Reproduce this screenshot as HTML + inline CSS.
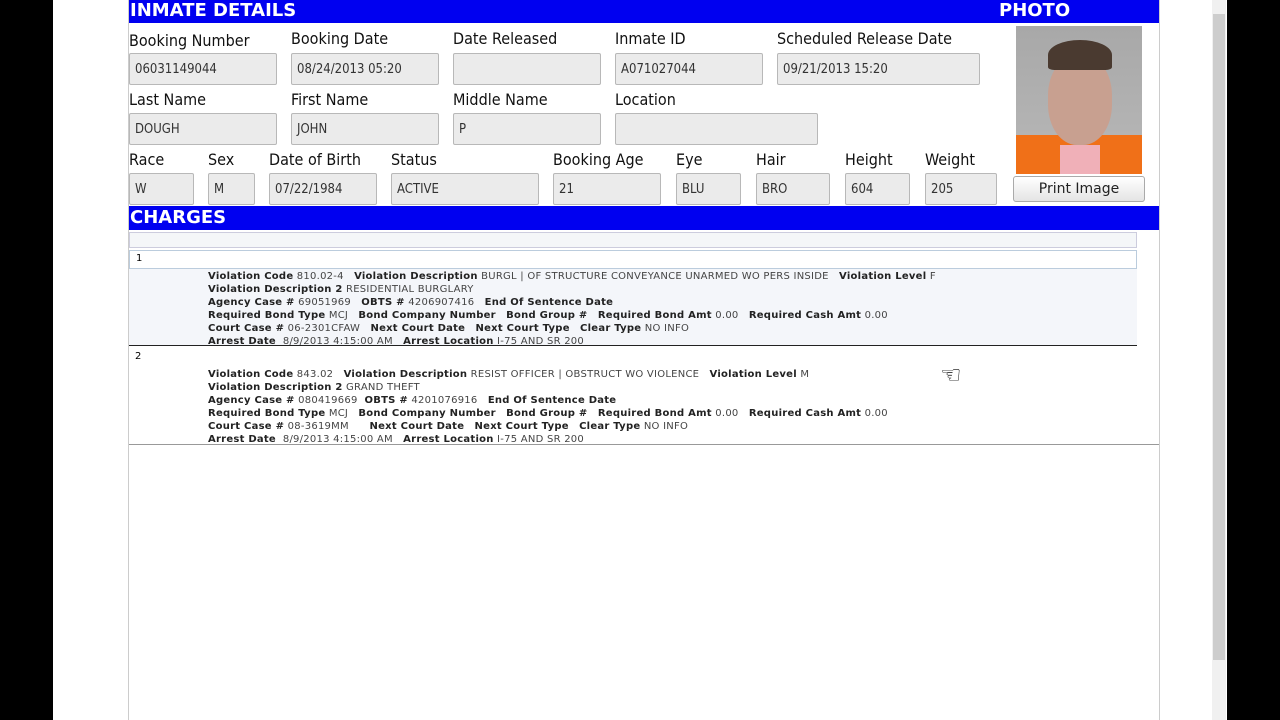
<!DOCTYPE html>
<html><head><style>
*{margin:0;padding:0;box-sizing:border-box}
body{width:1280px;height:720px;background:#000;position:relative;overflow:hidden;font-family:"DejaVu Sans","Liberation Sans",sans-serif}
.pg{position:absolute;left:53px;top:0;width:1174px;height:720px;background:#fff}
.a{position:absolute}
.hd{position:absolute;background:#0000f0;color:#fff;font-weight:bold;font-size:18px;padding-left:1px;line-height:22px}
.l{position:absolute;font-size:16px;color:#111;font-family:"DejaVu Sans Condensed","DejaVu Sans",sans-serif}
.i{position:absolute;height:32px;background:#ebebeb;border:1px solid #b8b8b8;border-radius:2px;font-size:13px;color:#333;padding-left:5px;line-height:32px;font-family:"DejaVu Sans Condensed","DejaVu Sans",sans-serif}
.c{position:absolute;left:208px;font-size:10px;letter-spacing:0.25px;color:#444;white-space:pre;line-height:13px;font-family:"DejaVu Sans","Liberation Sans",sans-serif}
.c b{color:#222}
</style></head><body>
<div class="pg"></div>
<div class="a" style="left:128px;top:0;width:1px;height:720px;background:#ccc"></div>
<div class="a" style="left:1159px;top:0;width:1px;height:720px;background:#ccc"></div>
<div class="a" style="left:1212px;top:0;width:14px;height:720px;background:#f0f0f0"></div>
<div class="a" style="left:1213px;top:14px;width:12px;height:646px;background:#cdcdcd"></div>
<div class="hd" style="left:129px;top:0;width:869px;height:23px">INMATE DETAILS</div>
<div class="hd" style="left:998px;top:0;width:161px;height:23px">PHOTO</div>

<div class="l" style="left:129px;top:31px">Booking Number</div>
<div class="l" style="left:291px;top:29px">Booking Date</div>
<div class="l" style="left:453px;top:29px">Date Released</div>
<div class="l" style="left:615px;top:29px">Inmate ID</div>
<div class="l" style="left:777px;top:29px">Scheduled Release Date</div>
<div class="i" style="left:129px;top:53px;width:148px">06031149044</div>
<div class="i" style="left:291px;top:53px;width:148px">08/24/2013 05:20</div>
<div class="i" style="left:453px;top:53px;width:148px"></div>
<div class="i" style="left:615px;top:53px;width:148px">A071027044</div>
<div class="i" style="left:777px;top:53px;width:203px">09/21/2013 15:20</div>

<div class="l" style="left:129px;top:90px">Last Name</div>
<div class="l" style="left:291px;top:90px">First Name</div>
<div class="l" style="left:453px;top:90px">Middle Name</div>
<div class="l" style="left:615px;top:90px">Location</div>
<div class="i" style="left:129px;top:113px;width:148px">DOUGH</div>
<div class="i" style="left:291px;top:113px;width:148px">JOHN</div>
<div class="i" style="left:453px;top:113px;width:148px">P</div>
<div class="i" style="left:615px;top:113px;width:203px"></div>

<div class="l" style="left:129px;top:150px">Race</div>
<div class="l" style="left:208px;top:150px">Sex</div>
<div class="l" style="left:269px;top:150px">Date of Birth</div>
<div class="l" style="left:391px;top:150px">Status</div>
<div class="l" style="left:553px;top:150px">Booking Age</div>
<div class="l" style="left:676px;top:150px">Eye</div>
<div class="l" style="left:756px;top:150px">Hair</div>
<div class="l" style="left:845px;top:150px">Height</div>
<div class="l" style="left:925px;top:150px">Weight</div>
<div class="i" style="left:129px;top:173px;width:65px">W</div>
<div class="i" style="left:208px;top:173px;width:47px">M</div>
<div class="i" style="left:269px;top:173px;width:108px">07/22/1984</div>
<div class="i" style="left:391px;top:173px;width:148px">ACTIVE</div>
<div class="i" style="left:553px;top:173px;width:108px">21</div>
<div class="i" style="left:676px;top:173px;width:65px">BLU</div>
<div class="i" style="left:756px;top:173px;width:74px">BRO</div>
<div class="i" style="left:845px;top:173px;width:65px">604</div>
<div class="i" style="left:925px;top:173px;width:72px">205</div>

<div class="a" style="left:1016px;top:26px;width:126px;height:148px;background:linear-gradient(#a8a8a8,#b8b8b8)"></div>
<div class="a" style="left:1016px;top:135px;width:126px;height:39px;background:#f07018"></div>
<div class="a" style="left:1060px;top:145px;width:40px;height:29px;background:#f0b0b8"></div>
<div class="a" style="left:1048px;top:55px;width:64px;height:90px;border-radius:45%;background:#c8a090"></div>
<div class="a" style="left:1048px;top:40px;width:64px;height:30px;border-radius:50% 50% 10% 10%;background:#4a3a30"></div>
<div class="a" style="left:1013px;top:176px;width:132px;height:26px;border:1px solid #aaa;border-radius:3px;background:linear-gradient(#fff,#e4e4e4);font-size:14px;text-align:center;line-height:24px;color:#222">Print Image</div>

<div class="hd" style="left:129px;top:206px;width:1030px;height:24px;line-height:23px">CHARGES</div>
<div class="a" style="left:129px;top:232px;width:1008px;height:16px;background:#f4f6f8;border:1px solid #ccd"></div>
<div class="a" style="left:129px;top:250px;width:1008px;height:19px;border:1px solid #bcd;background:#fff;font-size:10px;padding:2px 6px">1</div>
<div class="a" style="left:129px;top:269px;width:1008px;height:77px;background:#f4f6fa;border-bottom:1px solid #222"></div>
<div class="a" style="left:135px;top:351px;font-size:10px">2</div>
<div class="a" style="left:129px;top:444px;width:1030px;height:1px;background:#999"></div>
<div class="c" style="top:270px"><b>Violation Code</b> 810.02-4   <b>Violation Description</b> BURGL | OF STRUCTURE CONVEYANCE UNARMED WO PERS INSIDE   <b>Violation Level</b> F
<b>Violation Description 2</b> RESIDENTIAL BURGLARY
<b>Agency Case #</b> 69051969   <b>OBTS #</b> 4206907416   <b>End Of Sentence Date</b>
<b>Required Bond Type</b> MCJ   <b>Bond Company Number</b>   <b>Bond Group #</b>   <b>Required Bond Amt</b> 0.00   <b>Required Cash Amt</b> 0.00
<b>Court Case #</b> 06-2301CFAW   <b>Next Court Date</b>   <b>Next Court Type</b>   <b>Clear Type</b> NO INFO
<b>Arrest Date</b>  8/9/2013 4:15:00 AM   <b>Arrest Location</b> I-75 AND SR 200</div>
<div class="c" style="top:368px"><b>Violation Code</b> 843.02   <b>Violation Description</b> RESIST OFFICER | OBSTRUCT WO VIOLENCE   <b>Violation Level</b> M
<b>Violation Description 2</b> GRAND THEFT
<b>Agency Case #</b> 080419669  <b>OBTS #</b> 4201076916   <b>End Of Sentence Date</b>
<b>Required Bond Type</b> MCJ   <b>Bond Company Number</b>   <b>Bond Group #</b>   <b>Required Bond Amt</b> 0.00   <b>Required Cash Amt</b> 0.00
<b>Court Case #</b> 08-3619MM      <b>Next Court Date</b>   <b>Next Court Type</b>   <b>Clear Type</b> NO INFO
<b>Arrest Date</b>  8/9/2013 4:15:00 AM   <b>Arrest Location</b> I-75 AND SR 200</div>
<div class="a" style="left:940px;top:362px;font-size:24px;line-height:26px">☜</div>
</body></html>
